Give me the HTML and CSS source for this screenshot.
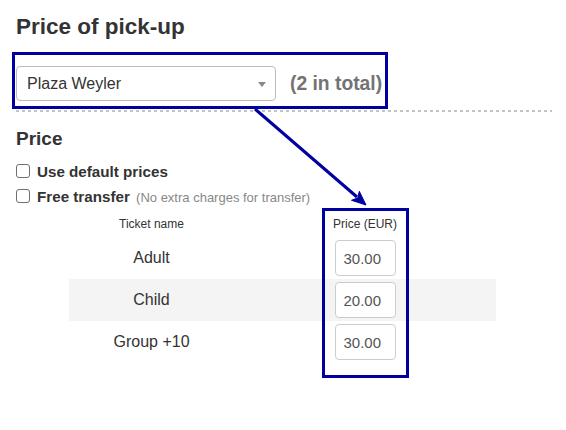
FILE: index.html
```html
<!DOCTYPE html>
<html>
<head>
<meta charset="utf-8">
<link rel="stylesheet" href="styles.css">
</head>
<body>
<div class="page">
  <h1 class="title">Price of pick-up</h1>
  <div class="pick">
    <div class="select"><span>Plaza Weyler</span><span class="caret"></span></div>
    <span class="total">(2 in total)</span>
  </div>
  <div class="sep"></div>
  <h2 class="subtitle">Price</h2>
  <div class="opts">
    <label class="opt"><span class="box"></span><span class="lbl">Use default prices</span></label>
    <label class="opt"><span class="box"></span><span class="lbl">Free transfer <span class="note">(No extra charges for transfer)</span></span></label>
  </div>
  <table class="prices">
    <thead>
      <tr><th class="c1">Ticket name</th><th class="c2">Price (EUR)</th></tr>
    </thead>
    <tbody>
      <tr><td class="name">Adult</td><td><div class="inp">30.00</div></td></tr>
      <tr class="alt"><td class="name">Child</td><td><div class="inp">20.00</div></td></tr>
      <tr><td class="name">Group +10</td><td><div class="inp">30.00</div></td></tr>
    </tbody>
  </table>
</div>
<div class="hl-col"></div>
<svg class="arrow" width="566" height="430" viewBox="0 0 566 430">
  <line x1="255" y1="109" x2="357" y2="197" stroke="#0000a0" stroke-width="3"/>
  <polygon points="366,205 351.5,200.3 357.8,197.9 359.3,191.3" fill="#0000a0" stroke="#0000a0" stroke-width="1" stroke-linejoin="miter"/>
</svg>
</body>
</html>
```
FILE: styles.css
```css
body {
  margin: 0;
  font-family: "Liberation Sans", Arial, sans-serif;
  color: #333;
  background: #fff;
  position: relative;
  width: 566px;
  height: 430px;
  overflow: hidden;
}
.page {
  padding: 14px 14px 0 16px;
}
.title {
  margin: 0;
  font-size: 22.5px;
  line-height: 26px;
  font-weight: bold;
  color: #333;
}
.pick {
  display: flex;
  align-items: center;
  width: max-content;
  gap: 14px;
  margin: 12px 0 0 -4px;
  border: 3px solid #0000a0;
  padding: 11px 3px 5px 1px;
}
.select {
  width: 260px;
  height: 35px;
  box-sizing: border-box;
  border: 1px solid #bbb;
  border-radius: 4px;
  display: flex;
  align-items: center;
  justify-content: space-between;
  padding: 0 9px 0 10px;
  font-size: 16px;
  color: #333;
}
.caret {
  width: 0;
  height: 0;
  border-left: 4.5px solid transparent;
  border-right: 4.5px solid transparent;
  border-top: 5px solid #888;
  margin-top: 1px;
}
.total {
  font-size: 19.3px;
  font-weight: bold;
  color: #737373;
}
.sep {
  margin: 1px 0 0 0;
  width: 536px;
  height: 2px;
  background: repeating-linear-gradient(to right, #c4c4c4 0 3px, transparent 3px 6px);
}
.subtitle {
  margin: 16px 0 0;
  font-size: 19px;
  line-height: 22px;
  font-weight: bold;
}
.opts {
  margin-top: 9px;
}
.opt {
  display: flex;
  align-items: center;
  gap: 7px;
  height: 25px;
  font-size: 15.2px;
  font-weight: bold;
}
.box {
  width: 14px;
  height: 14px;
  box-sizing: border-box;
  border: 1px solid #6f6f6f;
  border-radius: 3px;
  background: #fff;
  margin-top: -2px;
}
.note {
  font-size: 13px;
  font-weight: normal;
  color: #888;
  margin-left: 2px;
}
.prices {
  border-collapse: collapse;
  margin: 1px 0 0 53px;
}
.prices th {
  height: 27px;
  padding: 0;
  font-size: 12px;
  font-weight: normal;
  color: #333;
  text-align: center;
  vertical-align: middle;
}
.c1 { width: 165px; }
.c2 { width: 262px; }
.prices td {
  height: 42px;
  padding: 0;
  text-align: center;
  vertical-align: middle;
}
.name {
  font-size: 16px;
  color: #333;
}
.alt td {
  background: #f4f4f4;
}
.inp {
  width: 61px;
  height: 36px;
  box-sizing: border-box;
  margin: 0 auto;
  border: 1px solid #ccc;
  border-radius: 4px;
  background: #fff;
  padding-left: 8px;
  font-size: 15px;
  color: #555;
  text-align: left;
  display: flex;
  align-items: center;
}
.hl-col {
  position: absolute;
  left: 322px;
  top: 208px;
  width: 87px;
  height: 170px;
  box-sizing: border-box;
  border: 3px solid #0000a0;
}
.arrow {
  position: absolute;
  left: 0;
  top: 0;
  pointer-events: none;
}
```
